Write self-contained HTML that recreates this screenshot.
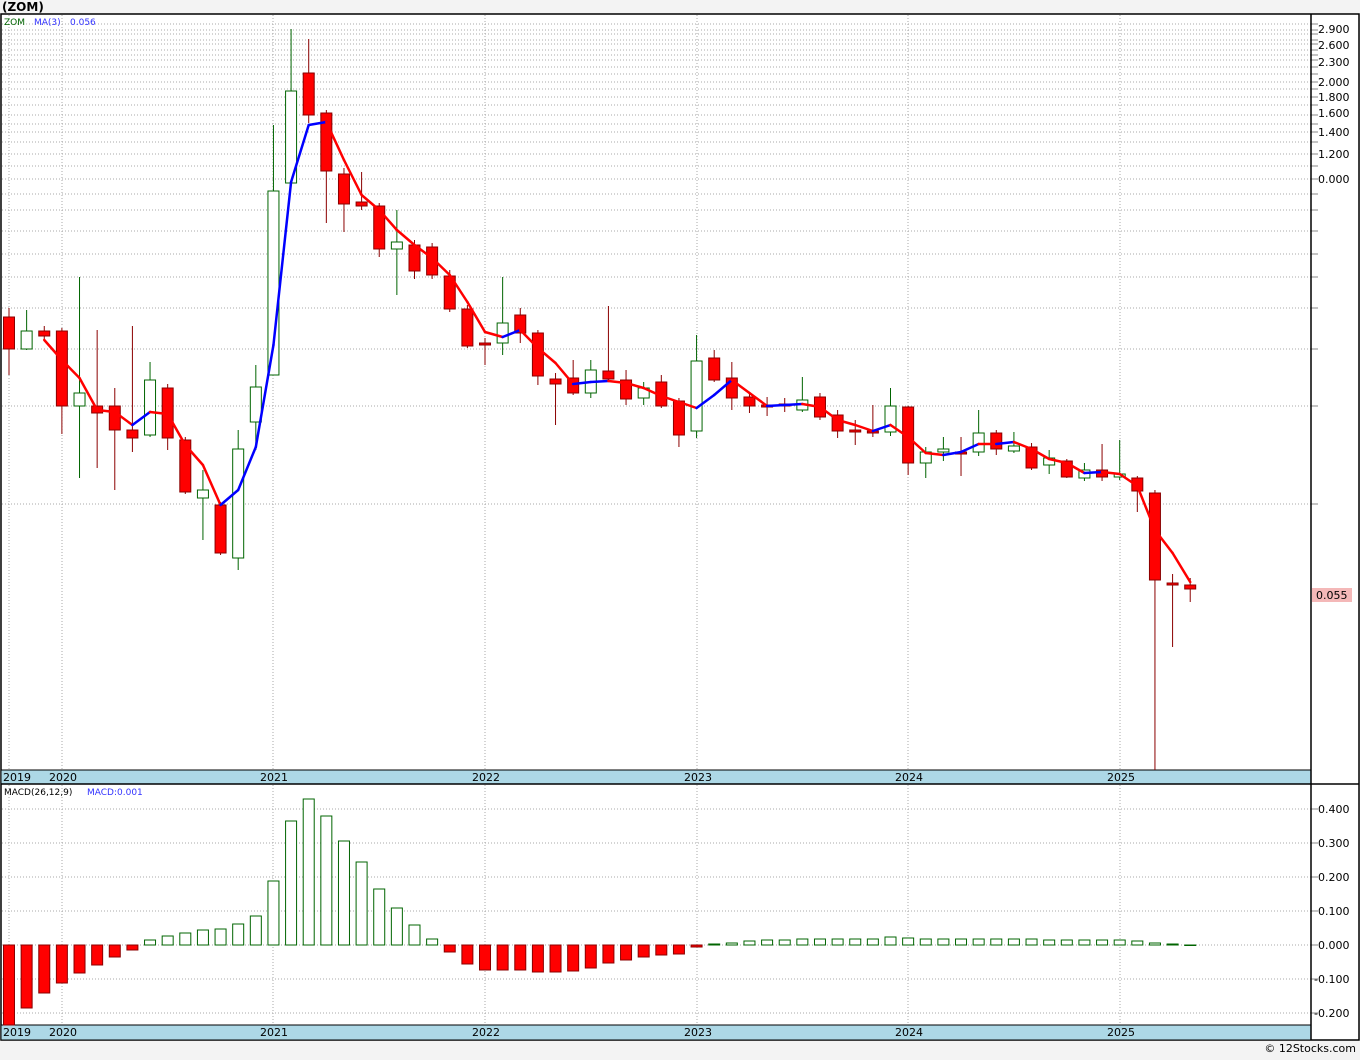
<!DOCTYPE html><html><head><meta charset="utf-8"><style>
body{margin:0;background:#f3f3f3;font-family:"DejaVu Sans","Liberation Sans",sans-serif}
svg text{font-family:"DejaVu Sans","Liberation Sans",sans-serif}
</style></head><body>
<svg id="s" width="1360" height="1056" xmlns="http://www.w3.org/2000/svg">
<rect x="0" y="0" width="1360" height="1056" fill="#f3f3f3"/>
<text x="2" y="11" font-size="12" font-weight="bold" fill="#000">(ZOM)</text>
<rect x="1" y="14" width="1358" height="1026" fill="#fff" stroke="#000" stroke-width="1.5"/>
<g id="grid"></g>
<rect x="1" y="770" width="1310" height="14" fill="#add8e6" stroke="#000"/>
<rect x="1" y="1025" width="1310" height="15" fill="#add8e6" stroke="#000"/>
<line x1="1311" y1="14" x2="1311" y2="1040" stroke="#000" stroke-width="1.5"/>
<line x1="1" y1="784" x2="1359" y2="784" stroke="#000" stroke-width="1.5"/>
<g id="c"></g>
<g font-size="11" fill="#000">
<text x="3" y="781">2019</text><text x="49" y="781">2020</text><text x="260" y="781">2021</text><text x="472" y="781">2022</text><text x="684" y="781">2023</text><text x="895" y="781">2024</text><text x="1107" y="781">2025</text>
<text x="3" y="1036">2019</text><text x="49" y="1036">2020</text><text x="260" y="1036">2021</text><text x="472" y="1036">2022</text><text x="684" y="1036">2023</text><text x="895" y="1036">2024</text><text x="1107" y="1036">2025</text>
<text x="1318" y="33">2.900</text><text x="1318" y="49">2.600</text><text x="1318" y="66">2.300</text><text x="1318" y="86">2.000</text><text x="1318" y="101">1.800</text><text x="1318" y="117">1.600</text><text x="1318" y="136">1.400</text><text x="1318" y="158">1.200</text><text x="1318" y="183">0.000</text>
<text x="1318" y="813">0.400</text><text x="1318" y="847">0.300</text><text x="1318" y="881">0.200</text><text x="1318" y="915">0.100</text><text x="1318" y="949">0.000</text><text x="1314" y="983">-0.100</text><text x="1314" y="1017">-0.200</text>
</g>
<rect x="1312" y="588" width="40" height="14" fill="#f4b8b8"/>
<text x="1316" y="599" font-size="11">0.055</text>
<text x="4" y="25" font-size="9" fill="#006400">ZOM</text><text x="34" y="25" font-size="9" fill="#3333ff">MA(3)</text><text x="70" y="25" font-size="9" fill="#3333ff">0.056</text>
<text x="4" y="795" font-size="9" fill="#000">MACD(26,12,9)</text><text x="87" y="795" font-size="9" fill="#3333ff">MACD:0.001</text>
<text x="1356" y="1052" font-size="11" text-anchor="end" fill="#000">© 12Stocks.com</text>
</svg>
<script>
var NS="http://www.w3.org/2000/svg";function el(p,t,a){var e=document.createElementNS(NS,t);for(var k in a)e.setAttribute(k,a[k]);p.appendChild(e);return e}
var g=document.getElementById('grid'),c=document.getElementById('c');
[24,30,34,40,44,50,55,60,67,74,82,89,97,105,115,124,132,142,154,166,179,194,210,231,254,277,308,349,406,504].forEach(function(y){el(g,'line',{x1:2,y1:y,x2:1311,y2:y,stroke:'#aaa','stroke-dasharray':'1,2'});el(g,'line',{x1:1311,y1:y,x2:1318,y2:y,stroke:'#888'})});
[809,843,877,911,945,979,1013].forEach(function(y){el(g,'line',{x1:2,y1:y,x2:1311,y2:y,stroke:'#aaa','stroke-dasharray':'1,2'});el(g,'line',{x1:1311,y1:y,x2:1318,y2:y,stroke:'#888'})});
[9,62,273,485,697,908,1120].forEach(function(x){el(g,'line',{x1:x,y1:15,x2:x,y2:770,stroke:'#aaa','stroke-dasharray':'1,2'});el(g,'line',{x1:x,y1:785,x2:x,y2:1025,stroke:'#aaa','stroke-dasharray':'1,2'})});
var D=[[317,349,308,375,0],[331,349,310,350,1],[331,336,326,340,0],[331,406,328,434,0],[393,406,277,478,1],[406,413,330,468,0],[406,430,388,490,0],[430,438,326,452,0],[380,435,362,437,1],[388,438,384,450,0],[440,492,437,494,0],[490,498,470,540,1],[505,553,502,555,0],[449,558,430,570,1],[387,422,365,450,1],[191,375,125,375,1],[91,183,29,183,1],[73,115,39,123,0],[113,171,110,223,0],[174,204,168,232,0],[202,206,172,210,0],[206,249,203,257,0],[242,249,210,295,1],[245,271,240,279,0],[247,275,243,279,0],[276,309,270,312,0],[309,346,305,348,0],[343,344,338,365,0],[323,343,277,355,1],[315,333,308,343,0],[333,376,330,385,0],[379,384,373,425,0],[378,393,360,395,0],[370,393,360,398,1],[371,379,306,382,0],[380,399,370,405,0],[388,398,382,405,1],[382,406,375,408,0],[401,435,398,447,0],[361,431,335,438,1],[358,380,350,382,0],[378,398,362,410,0],[397,406,393,413,0],[405,407,397,416,0],[404,406,398,412,0],[400,410,377,412,1],[397,417,393,420,0],[415,431,410,438,0],[430,432,420,445,0],[431,432,405,437,0],[406,432,388,436,1],[407,463,406,475,0],[452,463,447,478,1],[449,452,437,461,1],[452,453,437,476,0],[433,452,410,456,1],[433,449,430,455,0],[446,451,432,453,1],[447,468,443,470,0],[458,465,450,474,1],[461,477,459,478,0],[470,478,463,481,1],[470,477,444,481,0],[474,477,440,480,1],[478,491,476,512,0],[493,580,490,770,0],[583,585,574,647,0],[585,589,578,602,0]];
function X(i){return 9+17.63*i}
D.forEach(function(d,i){var x=X(i),col=d[4]?'#006400':'#8b0000';el(c,'line',{x1:x,y1:d[2],x2:x,y2:d[3],stroke:col});var h=Math.max(2,d[1]-d[0]);el(c,'rect',{x:x-5.5,y:d[0],width:11,height:h,fill:d[4]?'#fff':'#f00',stroke:d[4]?'#006400':'#8b0000'})});
var M=[,,340,360,378,410,412,425,412,414,445,465,505,490,447,345,182,125,122,160,195,210,230,245,258,275,302,332,337,330,348,363,384,382,381,383,388,396,402,408,395,380,393,406,405,404,407,420,425,431,425,437,453,455,452,444,444,442,449,459,463,473,472,474,486,530,553,582];
for(var i=3;i<M.length;i++){el(c,'line',{x1:X(i-1),y1:M[i-1],x2:X(i),y2:M[i],stroke:M[i]<M[i-1]?'#0000ff':'#ff0000','stroke-width':2.5,'stroke-linecap':'round'})}
var B=[1025,1008,993,983,973,965,957,950,940,936,933,930,929,924,916,881,821,799,816,841,862,889,908,925,939,952,964,970,970,970,972,972,971,968,963,960,957,955,954,947,944,943,941,940,940,939,939,939,939,939,937,938,939,939,939,939,939,939,939,940,940,940,940,940,941,943,944,945];
B.forEach(function(y,i){var x=X(i);if(y>945)el(c,'rect',{x:x-5.5,y:945,width:11,height:y-945,fill:'#f00',stroke:'#8b0000'});else el(c,'rect',{x:x-5.5,y:y,width:11,height:Math.max(0.5,945-y),fill:'#fff',stroke:'#006400'})});
</script>
</body></html>
